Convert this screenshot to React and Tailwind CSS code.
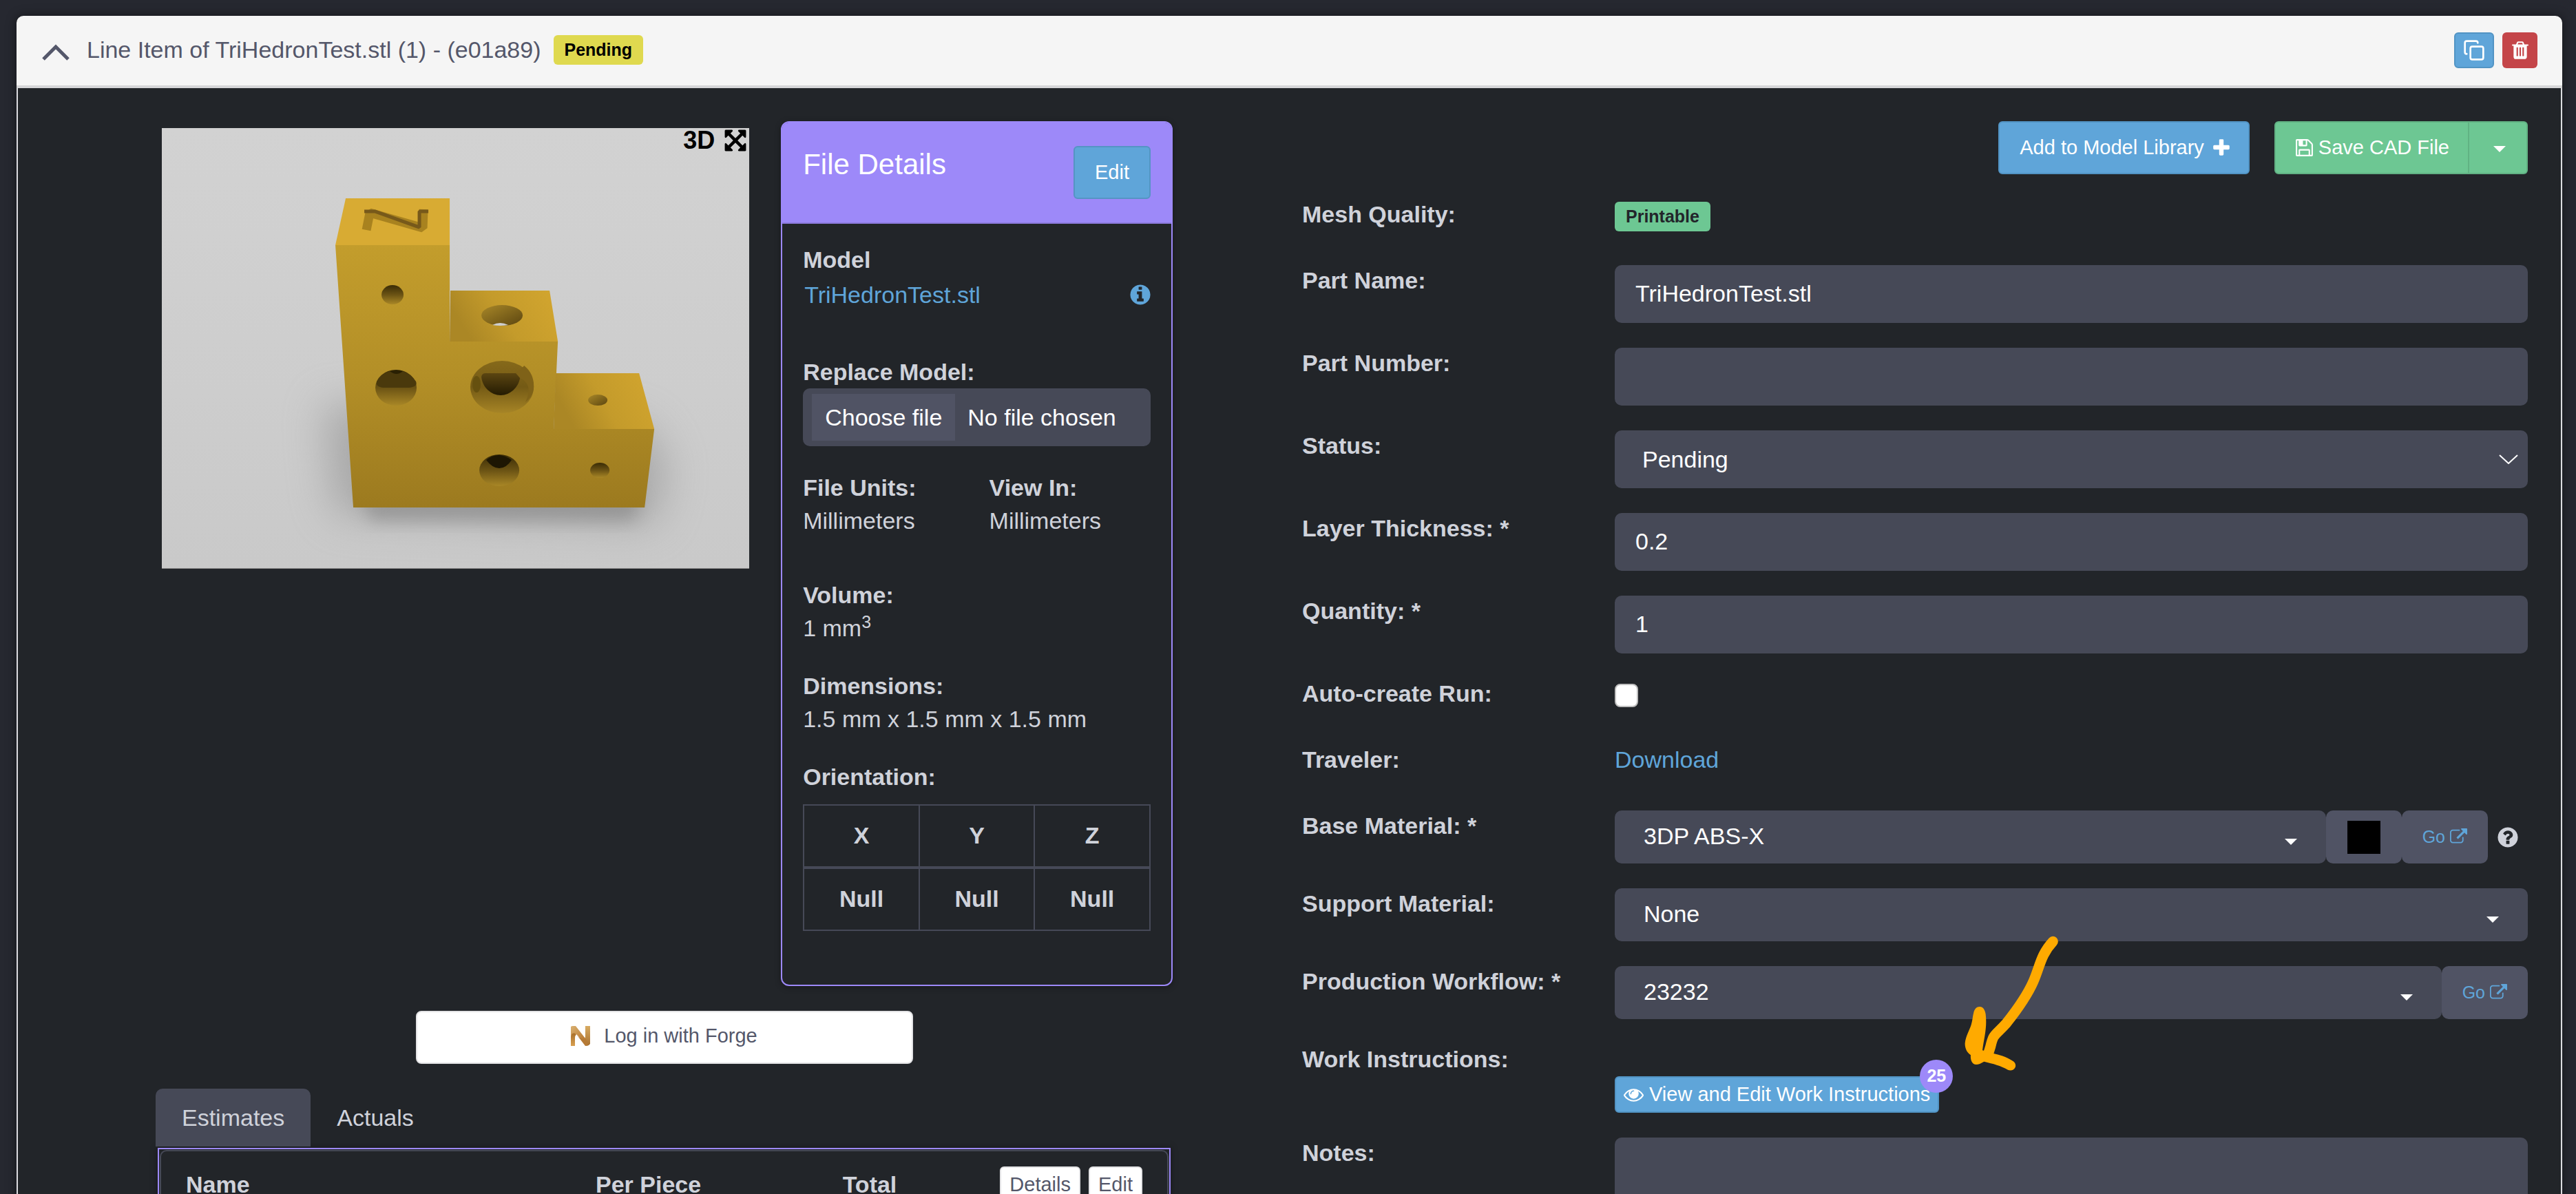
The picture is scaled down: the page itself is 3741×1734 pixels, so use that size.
import React, { useState } from "react";
import { Copy } from "lucide-react";

// Font Awesome 4 glyphs, all on a 1792 grid
const ICON_PATHS = {
  plus: "M1600 736v192q0 40-28 68t-68 28h-416v416q0 40-28 68t-68 28h-192q-40 0-68-28t-28-68v-416h-416q-40 0-68-28t-28-68v-192q0-40 28-68t68-28h416v-416q0-40 28-68t68-28h192q40 0 68 28t28 68v416h416q40 0 68 28t28 68z",
  info: "M1152 1376v-160q0-14-9-23t-23-9h-96v-512q0-14-9-23t-23-9h-320q-14 0-23 9t-9 23v160q0 14 9 23t23 9h96v320h-96q-14 0-23 9t-9 23v160q0 14 9 23t23 9h448q14 0 23-9t9-23zm-128-896v-160q0-14-9-23t-23-9h-192q-14 0-23 9t-9 23v160q0 14 9 23t23 9h192q14 0 23-9t9-23zm640 416q0 209-103 385.5t-279.5 279.5-385.5 103-385.5-103-279.5-279.5-103-385.5 103-385.5 279.5-279.5 385.5-103 385.5 103 279.5 279.5 103 385.5z",
  question:
    "M1024 1376v-192q0-14-9-23t-23-9h-192q-14 0-23 9t-9 23v192q0 14 9 23t23 9h192q14 0 23-9t9-23zm256-672q0-88-55.5-163t-138.5-116-170-41q-243 0-371 213-15 24 8 42l132 100q7 6 19 6 16 0 25-12 53-68 86-92 34-24 86-24 48 0 85.5 26t37.5 59q0 38-20 61t-68 45q-63 28-115.5 86.5t-52.5 125.5v36q0 14 9 23t23 9h192q14 0 23-9t9-23q0-19 21.5-49.5t54.5-49.5q32-18 49-28.5t46-35 44.5-48 28-60.5 12.5-81zm384 192q0 209-103 385.5t-279.5 279.5-385.5 103-385.5-103-279.5-279.5-103-385.5 103-385.5 279.5-279.5 385.5-103 385.5 103 279.5 279.5 103 385.5z",
  external:
    "M1408 928v320q0 119-84.5 203.5t-203.5 84.5h-832q-119 0-203.5-84.5t-84.5-203.5v-832q0-119 84.5-203.5t203.5-84.5h704q14 0 23 9t9 23v64q0 14-9 23t-23 9h-704q-66 0-113 47t-47 113v832q0 66 47 113t113 47h832q66 0 113-47t47-113v-320q0-14 9-23t23-9h64q14 0 23 9t9 23zm384-864v512q0 26-19 45t-45 19-45-19l-176-176-652 652q-10 10-23 10t-23-10l-114-114q-10-10-10-23t10-23l652-652-176-176q-19-19-19-45t19-45 45-19h512q26 0 45 19t19 45z",
  eye: "M1664 960q-152-236-381-353 61 104 61 225 0 185-131.5 316.5t-316.5 131.5-316.5-131.5-131.5-316.5q0-121 61-225-229 117-381 353 133 205 333.5 326.5t434.5 121.5 434.5-121.5 333.5-326.5zm-720-384q0-20-14-34t-34-14q-125 0-214.5 89.5t-89.5 214.5q0 20 14 34t34 14 34-14 14-34q0-86 61-147t147-61q20 0 34-14t14-34zm848 384q0 34-20 69-140 230-376.5 368.5t-499.5 138.5-499.5-139-376.5-368q-20-35-20-69t20-69q140-229 376.5-368t499.5-139 499.5 139 376.5 368q20 35 20 69z",
  trash:
    "M704 1376v-704q0-14-9-23t-23-9h-64q-14 0-23 9t-9 23v704q0 14 9 23t23 9h64q14 0 23-9t9-23zm256 0v-704q0-14-9-23t-23-9h-64q-14 0-23 9t-9 23v704q0 14 9 23t23 9h64q14 0 23-9t9-23zm256 0v-704q0-14-9-23t-23-9h-64q-14 0-23 9t-9 23v704q0 14 9 23t23 9h64q14 0 23-9t9-23zm-544-992h448l-48-117q-7-9-17-11h-317q-10 2-17 11zm928 32v64q0 14-9 23t-23 9h-96v948q0 83-47 143.5t-113 60.5h-832q-66 0-113-58.5t-47-141.5v-952h-96q-14 0-23-9t-9-23v-64q0-14 9-23t23-9h309l70-167q15-37 54-63t79-26h320q40 0 79 26t54 63l70 167h309q14 0 23 9t9 23z",
  expand:
    "M1411 541l-355 355 355 355 144-144q29-31 70-14 39 17 39 59v448q0 26-19 45t-45 19h-448q-42 0-59-40-17-39 14-69l144-144-355-355-355 355 144 144q31 30 14 69-17 40-59 40h-448q-26 0-45-19t-19-45v-448q0-42 40-59 39-17 69 14l144 144 355-355-355-355-144 144q-19 19-45 19-12 0-24-5-40-17-40-59v-448q0-26 19-45t45-19h448q42 0 59 40 17 39-14 69l-144 144 355 355 355-355-144-144q-31-30-14-69 17-40 59-40h448q26 0 45 19t19 45v448q0 42-39 59-13 5-25 5-26 0-45-19z",
  save: "M512 1536h768v-384h-768v384zm896 0h128v-896q0-14-10-38.5t-20-34.5l-281-281q-10-10-34-20t-39-10v416q0 40-28 68t-68 28h-576q-40 0-68-28t-28-68v-416h-128v1280h128v-416q0-40 28-68t68-28h832q40 0 68 28t28 68v416zm-384-928v-320q0-13-9.5-22.5t-22.5-9.5h-192q-13 0-22.5 9.5t-9.5 22.5v320q0 13 9.5 22.5t22.5 9.5h192q13 0 22.5-9.5t9.5-22.5zm640 32v928q0 40-28 68t-68 28h-1344q-40 0-68-28t-28-68v-1344q0-40 28-68t68-28h928q40 0 88 20t76 48l280 280q28 28 48 76t20 88z",
};

const Icon = ({ name, className }) => (
  <svg
    viewBox="0 0 1792 1792"
    fill="currentColor"
    aria-hidden="true"
    className={className}
  >
    <path d={ICON_PATHS[name]} />
  </svg>
);

const Caret = ({ className }) => (
  <svg viewBox="0 0 18 9" fill="currentColor" aria-hidden="true" className={className}>
    <path d="M0 0h18l-9 9z" />
  </svg>
);

const ForgeLogo = () => (
  <svg viewBox="0 0 28 29" aria-hidden="true" className="h-[29px] w-7">
    <defs>
      <linearGradient id="forgeDark" x1="0" y1="0" x2="0" y2="1">
        <stop offset="0" stopColor="#a8702c" />
        <stop offset="1" stopColor="#d9a050" />
      </linearGradient>
      <linearGradient id="forgeLight" x1="0" y1="0" x2="1" y2="1">
        <stop offset="0" stopColor="#d9b070" />
        <stop offset="1" stopColor="#b87830" />
      </linearGradient>
      <linearGradient id="forgeRight" x1="0" y1="0" x2="0" y2="1">
        <stop offset="0" stopColor="#d8ab62" />
        <stop offset="1" stopColor="#a9702e" />
      </linearGradient>
    </defs>
    <path d="M21 0h7v26q-2 3-5 3l-6-9q4 0 4-5z" fill="url(#forgeRight)" />
    <path d="M0 1q1-1 3-1h4l14 18q-2 4-6 1L8 12q-5-3-8 3z" fill="url(#forgeLight)" />
    <path d="M0 15Q2 8 8 12q-2 2-2 6v11H0z" fill="url(#forgeDark)" />
    <path d="M8 12q6 8 13 6l4 7q0 4-4 4z" fill="#b67a35" />
  </svg>
);

// Rendered thumbnail of the uploaded part
const ModelPreview = () => (
  <svg
    viewBox="0 0 853 640"
    role="img"
    aria-label="Preview of TriHedronTest.stl"
    className="block w-full"
  >
    <defs>
      <linearGradient id="floor" x1="0" y1="0" x2="0" y2="1">
        <stop offset="0" stopColor="#d2d2d2" />
        <stop offset="0.6" stopColor="#cdcdcd" />
        <stop offset="1" stopColor="#c9c9c9" />
      </linearGradient>
      <linearGradient id="front" x1="0" y1="0" x2="0" y2="1">
        <stop offset="0" stopColor="#c39d2c" />
        <stop offset="0.5" stopColor="#b38f27" />
        <stop offset="1" stopColor="#9c7a1f" />
      </linearGradient>
      <linearGradient id="step" x1="0" y1="0.3" x2="1" y2="0">
        <stop offset="0" stopColor="#ab8725" />
        <stop offset="0.4" stopColor="#c49b2b" />
        <stop offset="1" stopColor="#d3a62f" />
      </linearGradient>
      <linearGradient id="bore" x1="0" y1="0" x2="0" y2="1">
        <stop offset="0" stopColor="#3a2c06" />
        <stop offset="0.5" stopColor="#6b5314" />
        <stop offset="1" stopColor="#a98726" />
      </linearGradient>
      <linearGradient id="boreLight" x1="0" y1="0" x2="1" y2="1">
        <stop offset="0" stopColor="#a88728" />
        <stop offset="1" stopColor="#5c4610" />
      </linearGradient>
      <linearGradient id="boreBig" x1="0" y1="0" x2="0" y2="1">
        <stop offset="0" stopColor="#86691a" />
        <stop offset="0.5" stopColor="#745a15" />
        <stop offset="1" stopColor="#a78526" />
      </linearGradient>
      <linearGradient id="pit" x1="0" y1="0" x2="0" y2="1">
        <stop offset="0" stopColor="#5b4511" />
        <stop offset="1" stopColor="#241b02" />
      </linearGradient>
      <filter id="soft" x="-50%" y="-50%" width="200%" height="200%">
        <feGaussianBlur stdDeviation="30" />
      </filter>
      <filter id="contact" x="-50%" y="-50%" width="200%" height="200%">
        <feGaussianBlur stdDeviation="12" />
      </filter>
    </defs>
    <rect width="853" height="640" fill="url(#floor)" />
    <path d="M235 400L250 560L715 575L735 490L700 430Z" fill="#858585" opacity="0.5" filter="url(#soft)" />
    <path d="M288 535H696L686 570H304Z" fill="#7c7c7c" opacity="0.5" filter="url(#contact)" />

    {/* Front face */}
    <path d="M252 170H418V310H575L569 437H715L701 551H278Z" fill="url(#front)" />
    {/* Tops of the three steps */}
    <path d="M267 102H418V170H252Z" fill="#d8ab33" />
    <path d="M419 236H563L575 310H418Z" fill="url(#step)" />
    <path d="M572 356H693L715 437H569Z" fill="url(#step)" />

    {/* Engraved groove */}
    <path
      d="M297 148L302 123L379 145L380 118"
      fill="none"
      stroke="#a8821f"
      strokeWidth="13"
      strokeLinejoin="bevel"
    />
    <path
      d="M294 121H310L374 144V121H387"
      fill="none"
      stroke="#77591a"
      strokeWidth="5"
      strokeLinejoin="bevel"
    />

    <ellipse cx="335" cy="242" rx="16" ry="14" fill="url(#bore)" />
    <ellipse cx="340" cy="377" rx="30" ry="26" fill="url(#bore)" />
    <path d="M312 368Q322 352 340 352T369 368Q372 376 358 377H322Q310 376 312 368Z" fill="#4a390c" />
    <path d="M331 353Q341 350 350 353Q341 361 331 353Z" fill="#2a2003" />
    <ellipse cx="494" cy="376" rx="46" ry="38" fill="url(#boreBig)" />
    <path d="M464 361Q465 356 470 356H514Q520 356 520 363C518 376 506 388 492 388S465 376 464 361Z" fill="url(#pit)" />
    <path d="M514 356Q522 350 526 345Q541 357 540 377Q538 390 528 398Q540 372 520 363Z" fill="#7f6218" />
    <ellipse cx="457" cy="372" rx="6" ry="12" fill="#66500f" />
    <ellipse cx="490" cy="497" rx="29" ry="23" fill="url(#bore)" />
    <path d="M471 482Q488 468 508 482Q500 494 490 494T471 482Z" fill="#1d1603" />
    <ellipse cx="636" cy="497" rx="14" ry="11" fill="url(#bore)" />
    <ellipse cx="494" cy="272" rx="30" ry="15" fill="url(#boreLight)" />
    <path d="M480 286Q491 280 503 286Q491 288 480 286Z" fill="#cfcfcf" />
    <ellipse cx="633" cy="395" rx="14" ry="8" fill="url(#boreLight)" />
    <path d="M0 639.5H853" stroke="#777" />
  </svg>
);

// Hand-drawn pointer towards the work instructions button
const ArrowNote = () => (
  <svg
    viewBox="0 0 720 720"
    aria-hidden="true"
    className="pointer-events-none absolute -top-[166px] left-[435px] z-10 size-60"
  >
    <path
      d="M604 52C550 110 548 160 518 228C488 296 436 364 402 407C350 465 346 450 332 510L324 536"
      fill="none"
      stroke="#ffaa00"
      strokeWidth="45"
      strokeLinecap="round"
      strokeLinejoin="round"
    />
    <path
      d="M258 365C262 345 272 336 285 336C300 336 308 350 311 368C318 430 304 470 297 526L345 540C370 546 398 553 425 570C440 576 444 590 440 600C434 614 418 616 408 611C375 592 345 585 304 575C290 583 280 588 270 588C250 588 244 565 246 547C228 535 220 515 221 495C224 465 240 440 248 415C255 390 254 380 258 365Z"
      fill="#ffaa00"
    />
  </svg>
);

const FormRow = ({ label, htmlFor, children }) => (
  <div className="grid min-h-15 grid-cols-4 gap-x-9">
    <label htmlFor={htmlFor} className="font-bold leading-11">
      {label}
    </label>
    <div className="relative col-span-3">{children}</div>
  </div>
);

const TextField = ({ id, defaultValue }) => (
  <input
    id={id}
    type="text"
    defaultValue={defaultValue}
    className="block h-21 w-full rounded-[10px] bg-[#464957] px-[30px] pb-0.5 text-white outline-none"
  />
);

const MaterialSelect = ({ id, value }) => (
  <div className="relative flex-1 text-white">
    <select
      id={id}
      defaultValue={value}
      className="block h-[77px] w-full appearance-none rounded-[10px] bg-[#464957] px-[42px] pb-0.5 outline-none"
    >
      <option>{value}</option>
    </select>
    <Caret className="pointer-events-none absolute right-[42px] top-[41px] h-[9px] w-[18px]" />
  </div>
);

const GoLink = () => (
  <a
    href="#"
    className="flex h-[77px] items-center gap-[7px] rounded-[10px] bg-[#505364] px-[30px] text-[25px] text-[#5fa5d9]"
  >
    Go
    <Icon name="external" className="size-[25px]" />
  </a>
);

const Detail = ({ label, children }) => (
  <div className="leading-12">
    <div className="font-bold">{label}</div>
    <div>{children}</div>
  </div>
);

const FileDetails = () => (
  <section className="self-start rounded-xl border-2 border-[#9d89f9] shadow-[0_2px_10px_rgba(0,0,0,0.3)]">
    <header className="flex items-start justify-between rounded-t-[9px] border-b-2 border-[#8c7bdc] bg-[#9d89f9] px-[30px] py-[34px] text-white">
      <h2 className="text-[42px] leading-[53px]">File Details</h2>
      <button
        type="button"
        className="h-[77px] w-28 rounded-md border-2 border-[#5594c4] bg-[#5fa5d9] text-[29px]"
      >
        Edit
      </button>
    </header>

    <div className="px-[30px] pb-[78px] pt-7">
      <div className="font-bold leading-12">Model</div>
      <div className="flex items-center justify-between pt-[3px] leading-12">
        <a href="#" className="pl-0.5 text-[#5fa5d9]">
          TriHedronTest.stl
        </a>
        <Icon name="info" className="-mr-0.5 size-[34px] text-[#5fa5d9]" />
      </div>

      <div className="pt-16">
        <label htmlFor="replaceModel" className="block cursor-pointer">
          <span className="block font-bold leading-12">Replace Model:</span>
          <span className="flex h-21 items-center gap-[18px] rounded-[10px] bg-[#464957] px-[13px] text-white">
            <span className="bg-[#505364] px-[19px] leading-[68px]">Choose file</span>
            No file chosen
          </span>
        </label>
        <input id="replaceModel" type="file" className="sr-only" />
      </div>

      <div className="grid grid-cols-2 gap-9 pb-15 pt-9">
        <Detail label="File Units:">Millimeters</Detail>
        <Detail label="View In:">Millimeters</Detail>
      </div>

      <div className="flex flex-col gap-9">
        <Detail label="Volume:">
          1 mm<sup className="text-[25px]">3</sup>
        </Detail>
        <Detail label="Dimensions:">1.5 mm x 1.5 mm x 1.5 mm</Detail>
        <div className="font-bold leading-12">Orientation:</div>
      </div>

      <table className="mt-4 w-full table-fixed border-collapse border-2 border-[#464957] text-center font-bold leading-[44px]">
        <thead>
          <tr className="border-b-4 border-[#464957]">
            {["X", "Y", "Z"].map((axis) => (
              <th key={axis} className="border-x-2 border-[#464957] pb-[23px] pt-[21px]">
                {axis}
              </th>
            ))}
          </tr>
        </thead>
        <tbody>
          <tr>
            {["X", "Y", "Z"].map((axis) => (
              <td key={axis} className="border-x-2 border-[#464957] pb-[23px] pt-[21px]">
                Null
              </td>
            ))}
          </tr>
        </tbody>
      </table>
    </div>
  </section>
);

const CostPanel = () => {
  const [tab, setTab] = useState("Estimates");

  return (
    <div className="mt-9">
      <div role="tablist" className="flex">
        {["Estimates", "Actuals"].map((name) => (
          <button
            key={name}
            type="button"
            role="tab"
            aria-selected={tab === name}
            onClick={() => setTab(name)}
            className={
              tab === name
                ? "h-[84px] rounded-t-[10px] bg-[#464957] px-[38px]"
                : "h-[84px] rounded-t-[10px] px-[38px]"
            }
          >
            {name}
          </button>
        ))}
      </div>
      <div className="mx-[3px] mt-0.5 border-2 border-[#9d89f9] p-px shadow-[0_0_10px_rgba(0,0,0,0.35)]">
        <div className="rounded-[10px] border-2 border-[#464957]">
          <table className="w-full table-fixed text-left leading-8">
            <thead>
              <tr className="h-24">
                <th className="w-[41%] pl-9 font-bold">Name</th>
                <th className="w-[24%] pl-8 font-bold">Per Piece</th>
                <th className="pl-10 font-bold">
                  <div className="flex items-center justify-between pr-9">
                    Total
                    <div className="flex gap-3 text-[29px] font-normal text-[#54576a]">
                      <button
                        type="button"
                        className="h-[53px] rounded-md border-2 border-[#e3e3e5] bg-white px-3"
                      >
                        Details
                      </button>
                      <button
                        type="button"
                        className="h-[53px] rounded-md border-2 border-[#e3e3e5] bg-white px-3"
                      >
                        Edit
                      </button>
                    </div>
                  </div>
                </th>
              </tr>
            </thead>
          </table>
        </div>
      </div>
    </div>
  );
};

const LineItemForm = () => (
  <form className="flex flex-col gap-9" onSubmit={(e) => e.preventDefault()}>
    <div className="flex justify-end gap-9 text-[29px] text-white">
      <button
        type="button"
        className="flex h-[77px] items-center gap-2.5 rounded-md border-2 border-[#5294c4] bg-[#5fa5d9] pl-[29px] pr-6"
      >
        Add to Model Library
        <Icon name="plus" className="size-[30px]" />
      </button>
      <div className="flex">
        <button
          type="submit"
          className="flex h-[77px] items-center gap-1.5 rounded-l-md border-2 border-[#61b283] bg-[#6dc793] px-[27px]"
        >
          <Icon name="save" className="size-[29px]" />
          Save CAD File
        </button>
        <button
          type="button"
          aria-label="More save options"
          className="flex h-[77px] w-[85px] items-center justify-center rounded-r-md border-2 border-l-0 border-[#61b283] bg-[#6dc793] pl-1 pt-1"
        >
          <Caret className="h-[9px] w-[18px]" />
        </button>
      </div>
    </div>

    <FormRow label="Mesh Quality:">
      <span className="mt-1 block w-fit rounded-md bg-[#6dc793] px-4 text-[25px] font-bold leading-[43px] text-[#22252a]">
        Printable
      </span>
    </FormRow>
    <FormRow label="Part Name:" htmlFor="partName">
      <TextField id="partName" defaultValue="TriHedronTest.stl" />
    </FormRow>
    <FormRow label="Part Number:" htmlFor="partNumber">
      <TextField id="partNumber" />
    </FormRow>
    <FormRow label="Status:" htmlFor="status">
      <select
        id="status"
        defaultValue="Pending"
        className="block h-21 w-full appearance-none rounded-[10px] bg-[#464957] px-10 text-white outline-none"
      >
        <option>Pending</option>
      </select>
      <svg
        viewBox="0 0 28 14"
        aria-hidden="true"
        className="pointer-events-none absolute right-3.5 top-[35px] h-3.5 w-7"
      >
        <path d="M1 1l13 12L27 1" fill="none" stroke="#fff" strokeWidth="2" />
      </svg>
    </FormRow>
    <FormRow label="Layer Thickness: *" htmlFor="layerThickness">
      <TextField id="layerThickness" defaultValue="0.2" />
    </FormRow>
    <FormRow label="Quantity: *" htmlFor="quantity">
      <TextField id="quantity" defaultValue="1" />
    </FormRow>
    <FormRow label="Auto-create Run:" htmlFor="autoCreateRun">
      <input
        id="autoCreateRun"
        type="checkbox"
        className="mt-2 block size-[34px] appearance-none rounded-lg border-2 border-[#bfbfbf] bg-white checked:bg-[#5fa5d9]"
      />
    </FormRow>
    <FormRow label="Traveler:">
      <a href="#" className="block w-fit leading-11 text-[#5fa5d9]">
        Download
      </a>
    </FormRow>
    <FormRow label="Base Material: *" htmlFor="baseMaterial">
      <div className="flex items-center">
        <MaterialSelect id="baseMaterial" value="3DP ABS-X" />
        <div className="flex h-[77px] w-[110px] items-center justify-center rounded-[10px] bg-[#505364]">
          <div className="size-12 bg-black" />
        </div>
        <GoLink />
        <Icon name="question" className="ml-3 mr-3 size-[34px]" />
      </div>
    </FormRow>
    <FormRow label="Support Material:" htmlFor="supportMaterial">
      <MaterialSelect id="supportMaterial" value="None" />
    </FormRow>
    <FormRow label="Production Workflow: *" htmlFor="workflow">
      <div className="flex items-center">
        <MaterialSelect id="workflow" value="23232" />
        <GoLink />
      </div>
    </FormRow>
    <FormRow label="Work Instructions:">
      <div className="relative mt-[47px] w-fit">
        <button
          type="button"
          className="flex h-[53px] items-center gap-2 rounded-md border-2 border-[#5294c4] bg-[#5fa5d9] px-[11px] text-[29px] text-white"
        >
          <Icon name="eye" className="size-[29px]" />
          View and Edit Work Instructions
        </button>
        <span className="absolute -right-5 -top-6 flex size-12 items-center justify-center rounded-full bg-[#9d89f9] text-[25px] font-bold text-white">
          25
        </span>
      </div>
      <ArrowNote />
    </FormRow>
    <FormRow label="Notes:" htmlFor="notes">
      <textarea
        id="notes"
        rows={4}
        className="block w-full resize-none rounded-[10px] bg-[#464957] px-[30px] py-4 text-white outline-none"
      />
    </FormRow>
  </form>
);

const App = () => {
  return (
    <div className="h-screen overflow-hidden bg-[#262830] pl-6 pr-5 pt-[23px] font-['Liberation_Sans',Arial,sans-serif] text-[34px] text-[#cfd2da]">
      <div className="rounded-t-[10px] bg-[#222529] shadow-[0_0_16px_rgba(0,0,0,0.45)]">
        {/* Line item header */}
        <header className="flex h-[105px] items-center justify-between rounded-t-[10px] border-b-4 border-[#d6d6d8] bg-[#f5f5f5] px-9 pb-0.5">
          <div className="flex items-center text-[#54576a]">
            <button type="button" aria-label="Collapse line item" className="pt-1.5">
              <svg viewBox="0 0 42 24" className="h-6 w-[42px]">
                <path d="M3 22L21 4L39 22" fill="none" stroke="currentColor" strokeWidth="5" />
              </svg>
            </button>
            <h1 className="pl-6">Line Item of TriHedronTest.stl (1) - (e01a89)</h1>
            <span className="ml-[18px] rounded-md bg-[#dfd94f] px-4 text-[25px] font-bold leading-[43px] text-black">
              Pending
            </span>
          </div>
          <div className="flex gap-3 text-white">
            <button
              type="button"
              aria-label="Duplicate line item"
              className="flex h-[52px] w-[58px] items-center justify-center rounded-md border-2 border-[#5294c4] bg-[#5fa5d9]"
            >
              <Copy className="size-8" strokeWidth={2} />
            </button>
            <button
              type="button"
              aria-label="Delete line item"
              className="flex h-[52px] w-[51px] items-center justify-center rounded-md bg-[#c44549]"
            >
              <Icon name="trash" className="size-[30px]" />
            </button>
          </div>
        </header>

        {/* Line item body */}
        <div className="grid grid-cols-[1477fr_1780fr] gap-[188px] border-x-2 border-[#dcdce0] pb-12 pl-[200px] pr-12 pt-12">
          <div>
            <div className="grid grid-cols-[3fr_2fr] gap-[46px] pl-[9px]">
              <div className="relative mt-2.5 self-start">
                <ModelPreview />
                <div className="absolute right-0.5 top-0 flex items-center gap-3 text-[36px] font-bold leading-8 text-black">
                  3D
                  <Icon name="expand" className="size-9" />
                </div>
              </div>
              <FileDetails />
            </div>
            <button
              type="button"
              className="mx-auto mt-9 flex h-[77px] w-[722px] items-center justify-center gap-5 rounded-lg border-2 border-[#e3e3e5] bg-white pb-1 text-[29px] text-[#54576a]"
            >
              <ForgeLogo />
              Log in with Forge
            </button>
            <CostPanel />
          </div>
          <LineItemForm />
        </div>
      </div>
    </div>
  );
};

export default App;
